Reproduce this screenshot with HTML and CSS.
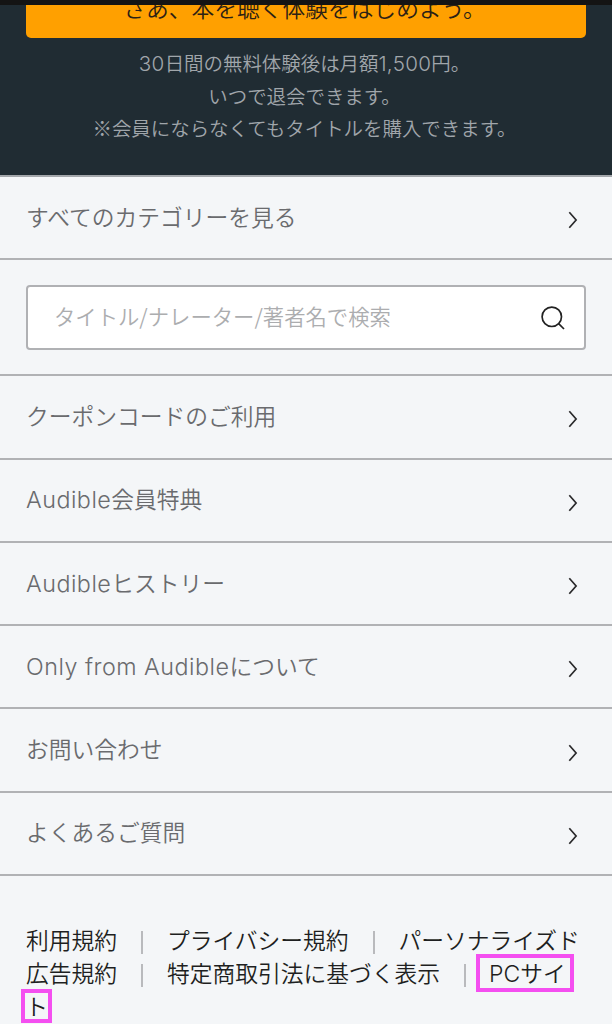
FILE: index.html
```
<!DOCTYPE html>
<html lang="ja">
<head>
<meta charset="utf-8">
<title>Audible</title>
<link rel="stylesheet" href="styles.css">
</head>
<body>
<svg class="defs" width="0" height="0"><symbol id="chevron" viewBox="0 0 10 18"><path d="M1.3 1.2 8.1 9 1.3 16.8"/></symbol></svg>
<header class="hero">
  <a class="cta"><span>さあ、本を聴く体験をはじめよう。</span></a>
  <p class="terms"><span class="num">30</span>日間の無料体験後は月額<span class="num">1,500</span>円。<br>いつで退会できます。<br>※会員にならなくてもタイトルを購入できます。</p>
</header>
<nav class="menu">
  <a class="row"><span>すべてのカテゴリーを見る</span><svg class="chev"><use href="#chevron"/></svg></a>
  <div class="search">
    <div class="field"><span>タイトル/ナレーター/著者名で検索</span>
      <svg class="glass" viewBox="0 0 24 24"><circle cx="10.8" cy="10.8" r="9.7"/><path d="M17.6 17.6 23 23"/></svg>
    </div>
  </div>
  <a class="row"><span>クーポンコードのご利用</span><svg class="chev"><use href="#chevron"/></svg></a>
  <a class="row"><span><span class="latin">Audible</span>会員特典</span><svg class="chev"><use href="#chevron"/></svg></a>
  <a class="row"><span><span class="latin">Audible</span>ヒストリー</span><svg class="chev"><use href="#chevron"/></svg></a>
  <a class="row"><span><span class="latin">Only from Audible</span>について</span><svg class="chev"><use href="#chevron"/></svg></a>
  <a class="row"><span>お問い合わせ</span><svg class="chev"><use href="#chevron"/></svg></a>
  <a class="row"><span>よくあるご質問</span><svg class="chev"><use href="#chevron"/></svg></a>
</nav>
<footer class="legal">
  <div class="line"><a>利用規約</a><i class="sep"></i><a>プライバシー規約</a><i class="sep"></i><a>パーソナライズド</a></div>
  <div class="line"><a>広告規約</a><i class="sep"></i><a>特定商取引法に基づく表示</a><i class="sep tight"></i><a class="mark"><span><span class="pc">PC</span>サイ</span></a></div>
  <div class="line"><a class="mark last"><span>ト</span></a></div>
</footer>
</body>
</html>
```
FILE: styles.css
```
* { box-sizing: border-box; }
body {
  margin: 0;
  height: 1024px;
  overflow: hidden;
  background: #f4f6f8;
  color: #6a6b6e;
  font-family: "Noto Sans CJK JP", sans-serif;
  font-weight: 350;
  font-size: 22.75px;
  white-space: nowrap;
}
.defs { position: absolute; }
.hero {
  height: 175px;
  border-top: 5px solid #141414;
  background: #202c33;
  padding: 0 26px;
  text-align: center;
}
.cta {
  display: flex;
  justify-content: center;
  height: 33px;
  overflow: hidden;
  background: #ffa000;
  border-radius: 0 0 5px 5px;
  color: #2b2115;
  line-height: 32px;
}
.cta span {
  margin: -13px 3px 0 0;
}
.terms {
  margin: 9px 3px 0 0;
  color: #a0a6ab;
  font-size: 19.45px;
  line-height: 32.6px;
}
.num {
  font-family: Inter, sans-serif;
  font-size: 20.6px;
  font-weight: 300;
  line-height: 1;
  letter-spacing: 0.3px;
}
.menu { border-top: 2px solid #a3a7ab; }
.row {
  display: flex;
  align-items: center;
  justify-content: space-between;
  height: 83.3px;
  padding: 0 34px 0 26px;
  border-bottom: 2px solid #b1b2b5;
}
.row > span { margin-top: -3px; }
.latin {
  font-family: Inter, sans-serif;
  font-weight: 300;
  font-size: 23.3px;
  line-height: 1;
  letter-spacing: 0.5px;
}
.chev {
  width: 10px;
  height: 18px;
  margin-top: 5px;
  fill: none;
  stroke: #29292b;
  stroke-width: 1.7;
}
.search {
  height: 116px;
  padding: 25px 26px;
  border-bottom: 2px solid #b1b2b5;
}
.field {
  display: flex;
  align-items: center;
  justify-content: space-between;
  height: 65px;
  padding: 0 19px 0 26px;
  border: 2px solid #b0b1b4;
  border-radius: 4px;
  background: #fff;
  color: #acadaf;
  font-size: 21.35px;
}
.field span { margin-top: -4px; }
.glass {
  width: 24px;
  height: 24px;
  fill: none;
  stroke: #222;
  stroke-width: 1.7;
}
.legal {
  padding: 47px 0 0 26px;
  color: #1e1f21;
}
.line {
  display: flex;
  align-items: center;
  height: 33px;
}
.sep {
  width: 2px;
  height: 23px;
  margin: 5px 24px 0;
  background: #b9babd;
}
.sep.tight { margin-right: 10px; }
.mark {
  display: flex;
  align-items: center;
  height: 38px;
  margin-top: 1px;
  padding: 0 4px 2px 9px;
  border: 4px solid #f44ff0;
}
.mark.last {
  justify-content: center;
  width: 31px;
  height: 34px;
  margin: 1px 0 0 -5px;
  padding: 0 0 2px;
}
.pc {
  font-family: Inter, sans-serif;
  font-weight: 300;
  font-size: 23px;
  line-height: 1;
}
```
